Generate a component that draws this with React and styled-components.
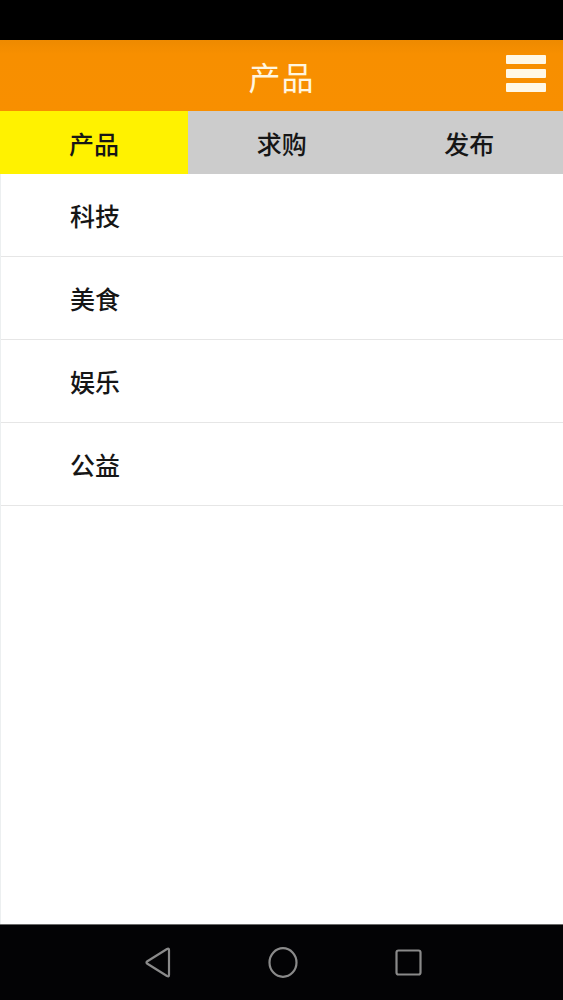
import styled, {createGlobalStyle} from 'styled-components';

const GlobalStyle = createGlobalStyle`
  html, body {
    margin: 0;
    padding: 0;
    background: #fff;
  }
  body {
    font-family: "Noto Sans CJK SC", "Noto Sans", sans-serif;
  }
`;

const tabs = ['产品', '求购', '发布'];
const categories = ['科技', '美食', '娱乐', '公益'];

export default function App() {
  return (
    <>
      <GlobalStyle />
      <Screen>
        <StatusBar />
        <Header>
          <Title>产品</Title>
          <MenuButton aria-label="menu">
            <Bar />
            <Bar />
            <Bar />
          </MenuButton>
        </Header>
        <TabRow>
          {tabs.map((tab, i) => (
            <Tab key={tab} $active={i === 0}>
              {tab}
            </Tab>
          ))}
        </TabRow>
        <List>
          {categories.map(item => (
            <Row key={item}>{item}</Row>
          ))}
        </List>
        <NavBar>
          <svg width="27" height="31" viewBox="0 0 27 31">
            <path d="M23 2 L3 14.5 Q2 15.5 3 16.5 L23 29 Q25 30 25 28 L25 3 Q25 1 23 2 Z" fill="none" stroke="#8a8a8a" strokeWidth="2.2" strokeLinejoin="round" />
          </svg>
          <svg width="30" height="31" viewBox="0 0 30 31">
            <ellipse cx="15" cy="15.5" rx="13.5" ry="14.3" fill="none" stroke="#8a8a8a" strokeWidth="2.2" />
          </svg>
          <svg width="27" height="27" viewBox="0 0 27 27">
            <rect x="1.5" y="1.5" width="24" height="24" rx="2" fill="none" stroke="#8a8a8a" strokeWidth="2.2" />
          </svg>
        </NavBar>
      </Screen>
    </>
  );
}

const Screen = styled.div`
  width: 563px;
  height: 1000px;
  display: flex;
  flex-direction: column;
  overflow: hidden;
`;

const StatusBar = styled.div`
  height: 40px;
  background: #000;
  flex-shrink: 0;
`;

const Header = styled.header`
  position: relative;
  height: 71px;
  flex-shrink: 0;
  display: flex;
  align-items: center;
  justify-content: center;
  background: linear-gradient(#ee8a00, #f78f00 20%, #f88f00);
`;

const Title = styled.h1`
  margin: 0;
  font-size: 32px;
  font-weight: 400;
  color: #fff6e0;
  letter-spacing: 1px;
`;

const MenuButton = styled.div`
  position: absolute;
  right: 17px;
  top: 15px;
  display: flex;
  flex-direction: column;
  gap: 5px;
`;

const Bar = styled.span`
  display: block;
  width: 40px;
  height: 9px;
  border-radius: 1px;
  background: #fff8e6;
`;

const TabRow = styled.nav`
  height: 63px;
  flex-shrink: 0;
  display: grid;
  grid-template-columns: 188px 1fr 1fr;
  background: #cccccc;
`;

const Tab = styled.div`
  display: flex;
  align-items: center;
  justify-content: center;
  font-size: 25px;
  font-weight: 500;
  color: #161616;
  background: ${p => (p.$active ? '#fff200' : 'transparent')};
`;

const List = styled.ul`
  flex: 1;
  margin: 0;
  padding: 0;
  list-style: none;
  border-left: 1px solid #eceff0;
`;

const Row = styled.li`
  height: 82px;
  display: flex;
  align-items: center;
  padding-left: 69px;
  font-size: 25px;
  font-weight: 500;
  color: #161616;
  border-bottom: 1px solid #e6e6e6;
`;

const NavBar = styled.footer`
  height: 75px;
  flex-shrink: 0;
  background: #030305;
  border-top: 1px solid #6a6a6a;
  display: flex;
  align-items: center;
  justify-content: center;
  gap: 97px;
  padding-left: 2px;
`;
